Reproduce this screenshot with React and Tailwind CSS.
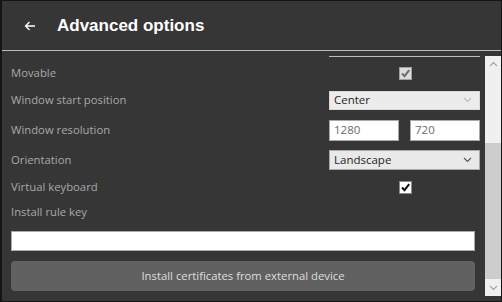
import React from "react";

const Chevron = ({ color = "#999", up = false }) => (
  <svg width="9" height="6" viewBox="0 0 9 6" className="shrink-0">
    <path
      d={up ? "M1 5 L4.5 1.5 L8 5" : "M1 1 L4.5 4.5 L8 1"}
      fill="none"
      stroke={color}
      strokeWidth="1.1"
    />
  </svg>
);

const Check = ({ color }) => (
  <svg width="11" height="11" viewBox="0 0 11 11">
    <path d="M2 5.5 L4.5 8.2 L9.2 2.2" fill="none" stroke={color} strokeWidth="2" />
  </svg>
);

const Label = ({ children }) => (
  <div className="flex-1 text-[11.3px] text-[#a9a9a9] leading-none">{children}</div>
);

export default function App() {
  return (
    <div
      className="w-[502px] h-[302px] bg-[#363636] border border-[#151515] border-l-2 flex flex-col overflow-hidden"
      style={{ fontFamily: '"Open Sans", "Noto Sans", sans-serif' }}
    >
      {/* header */}
      <div className="h-[49px] flex items-center shrink-0">
        <div className="w-[55px] flex justify-center pl-[1px]">
          <svg width="12" height="10" viewBox="0 0 12 10">
            <path d="M11 5 H1.5 M5.5 1 L1.5 5 L5.5 9" fill="none" stroke="#fff" strokeWidth="1.3" />
          </svg>
        </div>
        <div
          className="text-white text-[17px] font-bold leading-none"
          style={{ fontFamily: '"Liberation Sans", Arial, sans-serif' }}
        >
          Advanced options
        </div>
      </div>
      <div className="h-[1px] bg-[#bdbdbd] shrink-0" />

      {/* body */}
      <div className="flex-1 flex pt-[5px]">
        <div className="flex-1 flex flex-col pl-[9px] pr-[10px]">
          <div className="flex">
            <div className="flex-1" />
            <div className="w-[151px] h-[1px] bg-[#bdbdbd] mr-[-5px]" />
          </div>

          {/* Movable */}
          <div className="flex items-center h-[22px] mt-[5px]">
            <Label>Movable</Label>
            <div className="w-[151px] mr-[-5px] flex justify-center pl-[2px]">
              <div className="w-[13px] h-[13px] bg-[#dcdcdc] border border-[#a0a0a0] flex items-center justify-center">
                <Check color="#6d6d6d" />
              </div>
            </div>
          </div>

          {/* Window start position */}
          <div className="flex items-center h-[22px] mt-[5px]">
            <Label>Window start position</Label>
            <div className="w-[151px] mr-[-5px] h-[19px] bg-[#ececec] border border-[#d9d9d9] flex items-center justify-between pl-[4px] pr-[7px] text-[11.5px] text-[#1e1e1e]">
              <span>Center</span>
              <Chevron color="#bdbdbd" />
            </div>
          </div>

          {/* Window resolution */}
          <div className="flex items-center h-[22px] mt-[8px]">
            <Label>Window resolution</Label>
            <div className="w-[151px] mr-[-5px] flex justify-between">
              <div className="w-[70px] h-[21px] bg-white border border-[#a9a9a9] flex items-center pl-[4px] text-[11.5px] text-[#6a6a6a]">
                1280
              </div>
              <div className="w-[70px] h-[21px] bg-white border border-[#a9a9a9] flex items-center pl-[4px] text-[11.5px] text-[#6a6a6a]">
                720
              </div>
            </div>
          </div>

          {/* Orientation */}
          <div className="flex items-center h-[22px] mt-[8px]">
            <Label>Orientation</Label>
            <div className="w-[151px] mr-[-5px] h-[20px] bg-[#e9e9e9] border border-[#a9a9a9] flex items-center justify-between pl-[4px] pr-[7px] text-[11.5px] text-[#1e1e1e]">
              <span>Landscape</span>
              <Chevron color="#555" />
            </div>
          </div>

          {/* Virtual keyboard */}
          <div className="flex items-center h-[22px] mt-[5px]">
            <Label>Virtual keyboard</Label>
            <div className="w-[151px] mr-[-5px] flex justify-center pl-[2px]">
              <div className="w-[13px] h-[13px] bg-white border border-[#8a8a8a] flex items-center justify-center">
                <Check color="#111" />
              </div>
            </div>
          </div>

          {/* Install rule key */}
          <div className="flex items-center h-[22px] mt-[3px]">
            <Label>Install rule key</Label>
          </div>

          <div className="h-[20px] mt-[8px] bg-white border border-[#a9a9a9]" />

          <button className="h-[30px] mt-[10px] rounded-[4px] bg-[#616161] text-[11.3px] text-[#dedede] flex items-center justify-center">
            Install certificates from external device
          </button>
        </div>

        {/* scrollbar */}
        <div className="w-[16px] mb-[5px] flex flex-col bg-[#f0f0f0]">
          <div className="h-[16px] flex items-center justify-center">
            <Chevron color="#a3a3a3" up />
          </div>
          <div className="h-[71px]" />
          <div className="flex-1 bg-[#cdcdcd]" />
          <div className="h-[17px] flex items-center justify-center">
            <Chevron color="#a3a3a3" />
          </div>
        </div>
      </div>
    </div>
  );
}
